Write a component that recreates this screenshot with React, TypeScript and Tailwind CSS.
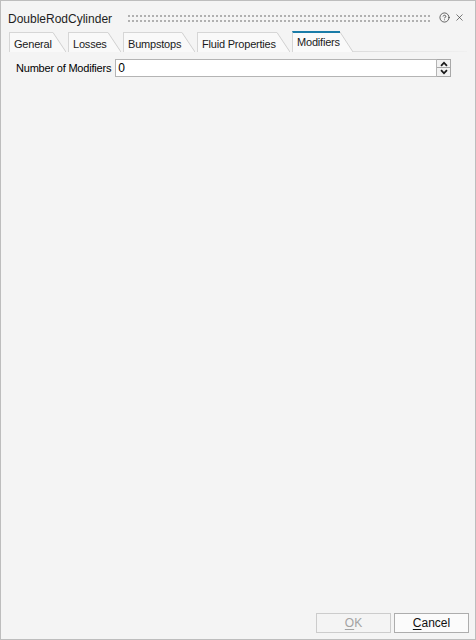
import React from 'react';
import { CircleHelp, X } from 'lucide-react';

type Tab = { label: string; width: number; active?: boolean };

const tabs: Tab[] = [
  { label: 'General', width: 44 },
  { label: 'Losses', width: 40 },
  { label: 'Bumpstops', width: 59 },
  { label: 'Fluid Properties', width: 80 },
  { label: 'Modifiers', width: 48, active: true },
];

// grip made of two rows of small dots
const Grip: React.FC = () => (
  <svg width="302" height="7" className="block">
    <defs>
      <pattern id="grip" width="4" height="5" patternUnits="userSpaceOnUse">
        <rect x="0" y="0" width="2" height="2" fill="#b0b0b0" />
      </pattern>
    </defs>
    <rect x="0" y="0" width="302" height="7" fill="url(#grip)" />
  </svg>
);

const TabItem: React.FC<{ tab: Tab }> = ({ tab }) => {
  const h = tab.active ? 21 : 20;
  return (
    <div className="flex items-end" style={{ height: h }}>
      <div
        className={
          tab.active
            ? 'h-[21px] border-l border-t-2 border-l-[#d6d6d6] border-t-[#1a7ca8] bg-[#fafafa] pl-[4px] pt-[1px] text-[#1a1a1a]'
            : 'h-[20px] border-l border-t border-[#d6d6d6] bg-[#f9f9f9] pl-[4px] pt-[3px] text-[#1a1a1a]'
        }
        style={{ width: tab.width }}
      >
        <span className="whitespace-nowrap leading-[14px]">{tab.label}</span>
      </div>
      <svg width="13" height={h} className="block shrink-0">
        <polygon points={`0,0 0,${h} 13,${h}`} fill={tab.active ? '#fafafa' : '#f9f9f9'} />
        <line x1="0" y1={tab.active ? 1 : 0.5} x2="13" y2={h} stroke="#d0d0d0" strokeWidth="1" />
      </svg>
    </div>
  );
};

const Arrow: React.FC<{ down?: boolean }> = ({ down }) => (
  <svg width="8" height="6" viewBox="0 0 8 6" className={down ? 'block rotate-180' : 'block'}>
    <path d="M4 0.5 L7.6 4.2 L6.3 5.4 L4 3.1 L1.7 5.4 L0.4 4.2 Z" fill="#1a1a1a" />
  </svg>
);

const App: React.FC = () => {
  return (
    <div className="w-[476px] h-[640px] flex flex-col border border-[#bdbdbd] bg-[#f4f4f4] font-['Liberation_Sans',Arial,sans-serif] text-[11px] tracking-[-0.2px] text-black overflow-hidden">
      {/* title bar */}
      <div className="h-[30px] pt-[6px] pl-[7px] flex items-center">
        <span className="text-[12px] tracking-normal leading-[16px] text-[#1e1e1e]">DoubleRodCylinder</span>
        <div className="ml-[16px] -mt-[1px]">
          <Grip />
        </div>
        <CircleHelp size={11} strokeWidth={1.6} className="ml-[9px] -mt-[3px] text-[#333]" />
        <X size={11} strokeWidth={1.4} className="ml-[4px] -mt-[3px] text-[#333]" />
      </div>

      {/* tabs */}
      <div className="h-[21px] pl-[8px] pr-[8px] flex items-end gap-[2px]">
        {tabs.map(t => (
          <TabItem key={t.label} tab={t} />
        ))}
        <div className="flex-1 h-px bg-gradient-to-r from-[#dcdcdc] to-[#f0f0f0] -ml-[2px]" />
      </div>

      {/* content */}
      <div className="mt-[7px] pl-[15px] pr-[24px] flex items-center">
        <span className="whitespace-nowrap leading-[18px] pr-[4px]">Number of Modifiers</span>
        <div className="flex-1 h-[18px] border border-[#b4b4b4] bg-white pl-[2px] text-[12px] tracking-normal leading-[16px]">0</div>
        <div className="w-[14px] h-[18px] border border-[#a8a8a8] border-l-0 bg-[#f2f2f2] flex flex-col">
          <div className="h-[8px] flex items-center justify-center border-b border-[#a8a8a8]">
            <Arrow />
          </div>
          <div className="flex-1 flex items-center justify-center">
            <Arrow down />
          </div>
        </div>
      </div>

      <div className="flex-1" />

      {/* buttons */}
      <div className="flex justify-end gap-[3px] pr-[6px] pb-[6px] text-[12px] tracking-normal">
        <button className="w-[75px] h-[20px] border border-[#cccccc] bg-[#f4f4f4] text-[#a3a3a3] leading-[18px]">
          <span className="underline underline-offset-2">O</span>K
        </button>
        <button className="w-[75px] h-[20px] border border-[#adadad] bg-[#fbfbfb] text-[#111] leading-[18px]">
          <span className="underline underline-offset-2">C</span>ancel
        </button>
      </div>
    </div>
  );
};

export default App;
